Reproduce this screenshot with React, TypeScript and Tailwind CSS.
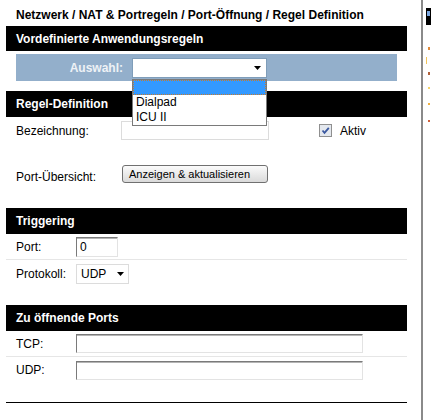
import { ReactNode } from 'react'

function SectionBar({ title, className = 'h-[26px]' }: { title: string; className?: string }) {
  return (
    <div className={`flex items-center bg-black pl-[10px] font-bold text-white ${className}`}>{title}</div>
  )
}

function Arrow() {
  return (
    <svg width="7" height="4" viewBox="0 0 7 4">
      <path d="M0 0h7L3.5 4z" fill="#000" />
    </svg>
  )
}

function Row({ label, children, className = '' }: { label: string; children: ReactNode; className?: string }) {
  return (
    <div className={`flex h-[26px] items-center pl-[10px] ${className}`}>
      <span className="w-[60px] shrink-0">{label}</span>
      {children}
    </div>
  )
}

// classic inset text field
const insetField =
  'border border-[#e3e3e3] border-l-[#7a7a7a] border-t-[#7a7a7a] bg-white shadow-[inset_0_1px_0_#b4b4b4]'

export default function App() {
  return (
    <div className="flex h-[420px] w-[431px] overflow-hidden bg-white font-['Liberation_Sans',Arial,sans-serif] text-[12px] leading-[14px] text-black">
      <div className="w-[421px] shrink-0 pl-[6px]">
        <div className="w-[401px]">
          <h1 className="h-[26px] pl-[10px] pt-[8px] text-[12px] font-bold leading-[14px]">
            Netzwerk / NAT &amp; Portregeln / Port-Öffnung / Regel Definition
          </h1>

          <SectionBar title="Vordefinierte Anwendungsregeln" className="h-[25px]" />
          <div className="ml-[10px] mt-[3px] flex h-[27px] w-[381px] items-start bg-[#93afcb] pt-[4px]">
            <span className="w-[107px] pt-[3px] text-right font-bold text-[#eef2f6]">Auswahl:</span>
            <div className="relative ml-[9px] h-[20px] w-[135px]">
              <div className="flex h-full items-center justify-end border border-[#7f9db9] bg-white pr-[5px]">
                <Arrow />
              </div>
              {/* open option list */}
              <div className="absolute left-0 top-[21px] z-10 w-[135px] border border-[#7a7a7a] bg-white">
                <div className="h-[15px] border border-dotted border-[#c87a2a] bg-[#3399ff]" />
                <div className="h-[15px] pl-[3px] leading-[15px]">Dialpad</div>
                <div className="h-[15px] pl-[3px] leading-[15px]">ICU II</div>
              </div>
            </div>
          </div>

          <SectionBar title="Regel-Definition" className="mt-[10px] h-[26px]" />
          <div className="mt-[4px] flex h-[19px] items-center pl-[10px]">
            <span className="w-[105px] shrink-0">Bezeichnung:</span>
            <div className="h-[19px] w-[148px] border border-[#dcdcdc] bg-white" />
            <div className="ml-[50px] flex h-[13px] w-[13px] items-center justify-center border border-[#8f8f8f] bg-[#e4e8ee]">
              <svg width="9" height="9" viewBox="0 0 9 9">
                <path d="M1.5 4.5 3.5 6.8 7.8 1.8" fill="none" stroke="#3a58a0" strokeWidth="1.8" />
              </svg>
            </div>
            <span className="ml-[8px]">Aktiv</span>
          </div>

          <div className="mt-[25px] flex items-start pl-[10px]">
            <span className="w-[106px] shrink-0 pt-[5px]">Port-Übersicht:</span>
            <button className="flex h-[18px] w-[146px] items-center rounded-[3px] border border-[#707070] bg-gradient-to-b from-[#fbfbfb] to-[#dadada] pl-[6px] text-[11px] leading-[14px] text-black">
              Anzeigen &amp; aktualisieren
            </button>
          </div>

          <SectionBar title="Triggering" className="mt-[24px] h-[26px]" />
          <Row label="Port:" className="border-b border-[#e6e6e6]">
            <div className={`flex h-[20px] w-[42px] items-center pl-[3px] ${insetField}`}>0</div>
          </Row>
          <Row label="Protokoll:" className="h-[28px]">
            <div className="flex h-[20px] w-[53px] items-center justify-between border border-[#dcdcdc] bg-white pl-[4px] pr-[4px]">
              <span>UDP</span>
              <Arrow />
            </div>
          </Row>

          <SectionBar title="Zu öffnende Ports" className="mt-[17px] h-[26px]" />
          <Row label="TCP:" className="border-b border-[#e6e6e6]">
            <div className={`h-[19px] w-[287px] ${insetField}`} />
          </Row>
          <Row label="UDP:">
            <div className={`h-[19px] w-[287px] ${insetField}`} />
          </Row>

          <div className="mt-[19px] h-px bg-black" />
        </div>
      </div>

      <div className="w-[2px] shrink-0 bg-[#8a8a8a]" />

      {/* clipped neighbour frame */}
      <div className="flex w-[8px] shrink-0 flex-col overflow-hidden pl-[3px]">
        <div className="mt-[8px] h-[17px] w-[5px] bg-black">
          <div className="ml-[1px] mt-[3px] h-[5px] w-[3px] bg-[#7aa6e0]" />
        </div>
        <div className="ml-[2px] mt-[22px] h-[3px] w-[2px] bg-[#e08a3a]" />
        <div className="mt-[7px] h-[7px] w-[1px] bg-[#f2c45a]" />
        <div className="ml-[2px] mt-[8px] h-[3px] w-[2px] bg-[#b0603a]" />
        <div className="ml-[2px] mt-[12px] h-[2px] w-[2px] bg-[#f5d36a]" />
        <div className="ml-[2px] mt-[14px] h-[2px] w-[2px] bg-[#f0b040]" />
        <div className="ml-[2px] mt-[15px] h-[2px] w-[2px] bg-[#d0603a]" />
      </div>
    </div>
  )
}
